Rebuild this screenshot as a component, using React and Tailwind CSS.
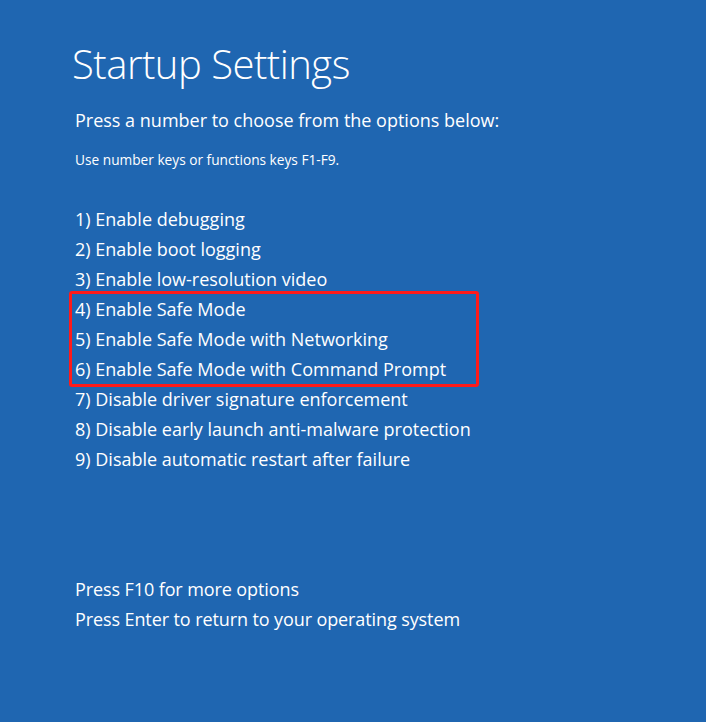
const options = [
  '1) Enable debugging',
  '2) Enable boot logging',
  '3) Enable low-resolution video',
];

const safeModes = [
  '4) Enable Safe Mode',
  '5) Enable Safe Mode with Networking',
  '6) Enable Safe Mode with Command Prompt',
];

const moreOptions = [
  '7) Disable driver signature enforcement',
  '8) Disable early launch anti-malware protection',
  '9) Disable automatic restart after failure',
];

const Row = ({ children }) => <div className="h-[30px] leading-[30px]">{children}</div>;

export default function App() {
  return (
    <div
      className="h-[722px] w-[706px] overflow-hidden bg-[#1f66b1] text-white"
      style={{ fontFamily: '"Open Sans", "Noto Sans", sans-serif' }}
    >
      <div className="pl-[72px] pt-[36px]">
        <h1 className="text-[40px] font-light leading-[56px] tracking-[-0.5px]">Startup Settings</h1>
        <div className="pl-[3px]">
          <p className="mt-[15px] text-[18px] leading-[26px]">Press a number to choose from the options below:</p>
          <p className="mt-[18px] text-[13.7px] leading-[18px]">Use number keys or functions keys F1-F9.</p>

          <div className="mt-[35px] text-[18px]">
            {options.map((o) => (
              <Row key={o}>{o}</Row>
            ))}
          </div>
        </div>

        <div className="-my-[3px] -ml-[3px] w-[410px] rounded-[3px] border-[3px] border-[#ff1a1a]">
          <div className="pl-[3px] text-[18px]">
            {safeModes.map((o) => (
              <Row key={o}>{o}</Row>
            ))}
          </div>
        </div>

        <div className="pl-[3px] text-[18px]">
          {moreOptions.map((o) => (
            <Row key={o}>{o}</Row>
          ))}
          <div className="mt-[100px] tracking-[-0.1px]">
            <Row>Press F10 for more options</Row>
            <Row>Press Enter to return to your operating system</Row>
          </div>
        </div>
      </div>
    </div>
  );
}
